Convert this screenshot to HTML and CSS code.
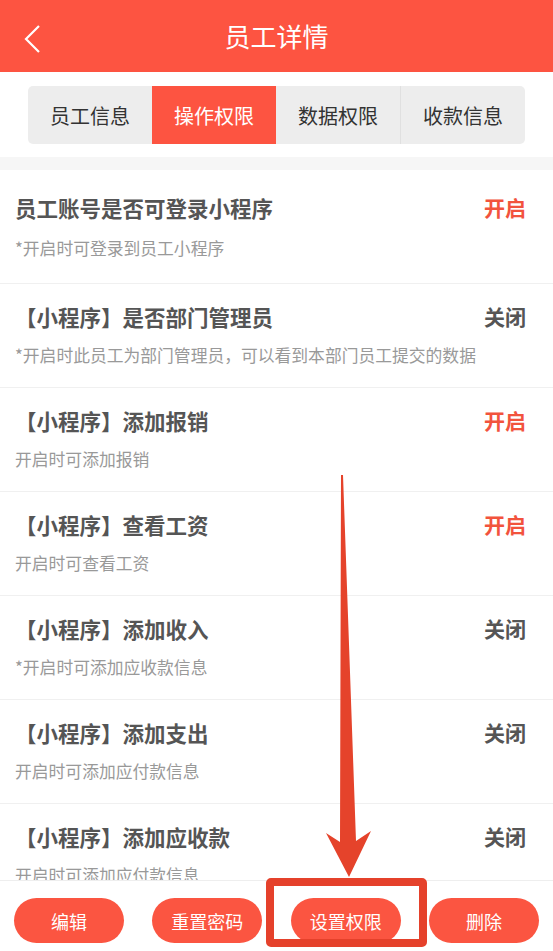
FILE: index.html
```html
<!DOCTYPE html>
<html lang="zh-CN">
<head>
    <meta charset="UTF-8">
    <meta name="viewport" content="width=device-width, initial-scale=1.0">
    <title>员工详情</title>
    <link rel="stylesheet" href="styles.css">
</head>
<body>
    <div class="page">
        <div class="header">
            <span class="back">
                <svg width="18" height="28" viewBox="0 0 18 28"><polyline points="15,1 2,14 15,27" fill="none" stroke="#fff" stroke-width="2.2"/></svg>
            </span>
            <h1>员工详情</h1>
        </div>

        <div class="tabs-wrap">
            <div class="tabs">
                <div class="tab">员工信息</div>
                <div class="tab active">操作权限</div>
                <div class="tab">数据权限</div>
                <div class="tab">收款信息</div>
            </div>
        </div>
        <div class="gap"></div>

        <div class="list">
            <div class="item first">
                <div class="item-top">
                    <span class="item-title">员工账号是否可登录小程序</span>
                    <span class="state on">开启</span>
                </div>
                <div class="item-desc">*开启时可登录到员工小程序</div>
            </div>
            <div class="item">
                <div class="item-top">
                    <span class="item-title">【小程序】是否部门管理员</span>
                    <span class="state">关闭</span>
                </div>
                <div class="item-desc">*开启时此员工为部门管理员，可以看到本部门员工提交的数据</div>
            </div>
            <div class="item">
                <div class="item-top">
                    <span class="item-title">【小程序】添加报销</span>
                    <span class="state on">开启</span>
                </div>
                <div class="item-desc">开启时可添加报销</div>
            </div>
            <div class="item">
                <div class="item-top">
                    <span class="item-title">【小程序】查看工资</span>
                    <span class="state on">开启</span>
                </div>
                <div class="item-desc">开启时可查看工资</div>
            </div>
            <div class="item">
                <div class="item-top">
                    <span class="item-title">【小程序】添加收入</span>
                    <span class="state">关闭</span>
                </div>
                <div class="item-desc">*开启时可添加应收款信息</div>
            </div>
            <div class="item">
                <div class="item-top">
                    <span class="item-title">【小程序】添加支出</span>
                    <span class="state">关闭</span>
                </div>
                <div class="item-desc">开启时可添加应付款信息</div>
            </div>
            <div class="item">
                <div class="item-top">
                    <span class="item-title">【小程序】添加应收款</span>
                    <span class="state">关闭</span>
                </div>
                <div class="item-desc">开启时可添加应付款信息</div>
            </div>
        </div>

        <div class="footer">
            <button class="btn">编辑</button>
            <button class="btn">重置密码</button>
            <button class="btn">设置权限</button>
            <button class="btn">删除</button>
        </div>
    </div>

    <!-- annotation drawn over the screenshot -->
    <svg class="arrow" width="553" height="951" viewBox="0 0 553 951">
        <polygon points="341,475 343,475 356,841 371,831 349,877 326,833 340,842" fill="#e5432b"/>
    </svg>
    <div class="mark"></div>
</body>
</html>
```

FILE: styles.css
```css
* {
    box-sizing: border-box;
}
body {
    margin: 0;
    font-family: "Noto Sans CJK SC", "Noto Sans", sans-serif;
    background: #fff;
}
.page {
    height: 951px;
    display: flex;
    flex-direction: column;
    overflow: hidden;
}
.header {
    height: 72px;
    background: #fd5441;
    display: flex;
    align-items: center;
    justify-content: center;
    position: relative;
    flex-shrink: 0;
}
.header h1 {
    margin: 0;
    color: #fff;
    font-size: 26px;
    font-weight: normal;
    line-height: 1;
}
.back {
    position: absolute;
    left: 24px;
    top: 25px;
    display: flex;
}
.tabs-wrap {
    padding: 14px 28px 13px;
    flex-shrink: 0;
}
.tabs {
    display: flex;
    height: 58px;
    background: #ededed;
    border-radius: 5px;
    overflow: hidden;
}
.tab {
    flex: 1;
    display: flex;
    align-items: center;
    justify-content: center;
    font-size: 20px;
    color: #333;
    border-left: 1px solid #e0e0e0;
}
.tab:first-child,
.tab.active,
.tab.active + .tab {
    border-left: none;
}
.tab.active {
    background: #fd5441;
    color: #fff;
}
.gap {
    height: 13px;
    background: #f6f6f6;
    flex-shrink: 0;
}
.list {
    flex: 1;
    overflow: hidden;
}
.item {
    padding: 18px 27px 21px 15px;
    border-bottom: 1px solid #f0f0f0;
}
.item.first {
    padding-top: 23px;
    padding-bottom: 24px;
}
.item-top {
    display: flex;
    justify-content: space-between;
    align-items: center;
    height: 28px;
}
.item-title {
    font-size: 21.5px;
    font-weight: bold;
    color: #555;
}
.state {
    font-size: 21px;
    font-weight: bold;
    color: #555;
}
.state.on {
    color: #f2533d;
}
.item-desc {
    margin-top: 14px;
    font-size: 16.8px;
    line-height: 22px;
    color: #999;
    white-space: nowrap;
}
.item.first .item-desc {
    margin-top: 16px;
}
.footer {
    height: 71px;
    flex-shrink: 0;
    border-top: 1px solid #eee;
    background: #fff;
    display: flex;
    justify-content: space-between;
    padding: 17px 14px 0;
}
.btn {
    width: 110px;
    height: 45px;
    border: none;
    border-radius: 23px;
    background: #fb5541;
    color: #fff;
    font-family: inherit;
    font-size: 18px;
    padding: 0;
}
.arrow {
    position: absolute;
    left: 0;
    top: 0;
    pointer-events: none;
}
.mark {
    position: absolute;
    left: 266px;
    top: 878px;
    width: 161px;
    height: 69px;
    border: 8px solid #e5412b;
    border-radius: 5px;
}
```
